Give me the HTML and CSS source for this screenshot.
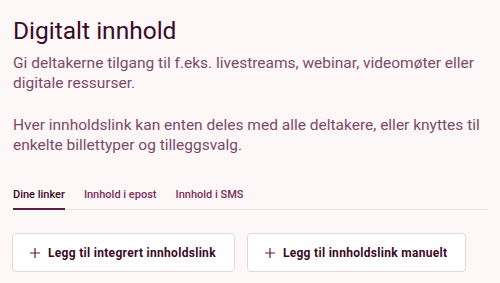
FILE: index.html
```html
<!DOCTYPE html>
<html lang="no">
<head>
<meta charset="utf-8">
<link rel="stylesheet" href="styles.css">
</head>
<body>
<main class="page">
  <h1 class="title">Digitalt innhold</h1>
  <p class="lead">Gi deltakerne tilgang til f.eks. livestreams, webinar, videomøter eller digitale ressurser.</p>
  <p class="lead lead-second">Hver innholdslink kan enten deles med alle deltakere, eller knyttes til enkelte billettyper og tilleggsvalg.</p>
  <nav class="tabs">
    <a class="tab active">Dine linker</a>
    <a class="tab">Innhold i epost</a>
    <a class="tab">Innhold i SMS</a>
  </nav>
  <div class="actions">
    <button class="btn"><svg class="plus" viewBox="0 0 10 10" width="10" height="10"><path d="M5 0v10M0 5h10" stroke="currentColor" stroke-width="1.2" fill="none"/></svg><span>Legg til integrert innholdslink</span></button>
    <button class="btn"><svg class="plus" viewBox="0 0 10 10" width="10" height="10"><path d="M5 0v10M0 5h10" stroke="currentColor" stroke-width="1.2" fill="none"/></svg><span>Legg til innholdslink manuelt</span></button>
  </div>
</main>
</body>
</html>
```

FILE: styles.css
```css
html, body {
  margin: 0;
  padding: 0;
  background: #fdf7f8;
}
body {
  font-family: Roboto, "Noto Sans", sans-serif;
  color: #3b0a27;
}
.page {
  padding: 17px 12px 0 13px;
}
.title {
  margin: 0;
  font-size: 24.5px;
  font-weight: 400;
  line-height: 28px;
  color: #3b0a27;
}
.lead {
  margin: 8px 0 0;
  font-size: 15.5px;
  line-height: 20px;
  color: #7c4a69;
  max-width: 470px;
}
.lead-second {
  margin-top: 22px;
}
.tabs {
  display: flex;
  gap: 19px;
  margin-top: 32px;
  border-bottom: 1px solid #ece1e5;
}
.tab {
  font-size: 11px;
  line-height: 16px;
  font-weight: 500;
  color: #7a2f5a;
  padding: 0 0 5px;
  border-bottom: 2px solid transparent;
  margin-bottom: -1px;
}
.tab.active {
  color: #3b0a27;
  border-bottom-color: #5a1f40;
}
.actions {
  display: flex;
  gap: 12px;
  margin-top: 23px;
  margin-left: -1px;
}
.btn {
  display: flex;
  align-items: center;
  gap: 8px;
  height: 39px;
  padding: 0 18px 0 17px;
  background: #fff;
  border: 1px solid #e3d5db;
  border-radius: 4px;
  font-family: Roboto, "Noto Sans", sans-serif;
  font-size: 12px;
  font-weight: 700;
  letter-spacing: 0.3px;
  color: #3b0a27;
}
.plus {
  color: #5a1f40;
  flex: none;
}
```
